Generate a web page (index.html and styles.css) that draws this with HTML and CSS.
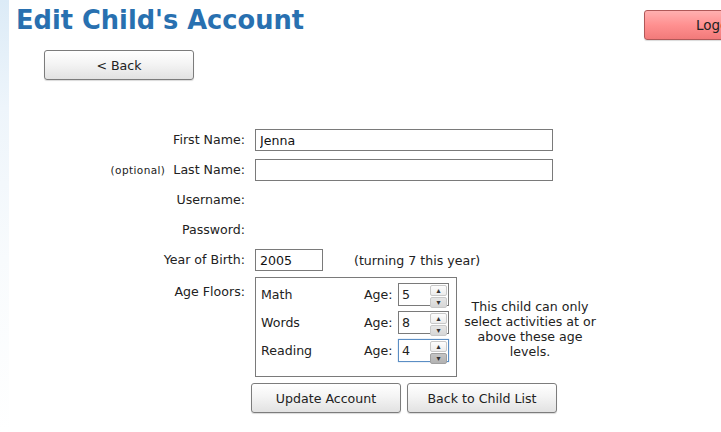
FILE: index.html
```html
<!DOCTYPE html>
<html lang="en">
<head>
    <meta charset="UTF-8">
    <title>Edit Child's Account</title>
    <link rel="stylesheet" href="styles.css">
</head>
<body>
    <div class="edge"></div>
    <div class="page">
        <div class="header">
            <h1>Edit Child's Account</h1>
            <button class="btn btn-logout">Logout</button>
        </div>
        <button class="btn btn-back">&lt; Back</button>

        <form class="account-form">
            <label class="label">First Name:</label>
            <div class="field"><input class="text-input wide" type="text" value="Jenna"></div>

            <label class="label"><span class="optional">(optional)</span>Last Name:</label>
            <div class="field"><input class="text-input wide" type="text"></div>

            <label class="label">Username:</label>
            <div class="field"></div>

            <label class="label">Password:</label>
            <div class="field"></div>

            <label class="label">Year of Birth:</label>
            <div class="field">
                <input class="text-input short" type="text" value="2005">
                <span class="turning">(turning 7 this year)</span>
            </div>

            <label class="label label-top">Age Floors:</label>
            <div class="field field-top">
                <div class="floors">
                    <div class="floor-row">
                        <span class="subject">Math</span>
                        <span class="age">Age:</span>
                        <div class="spin">
                            <span class="spin-value">5</span>
                            <div class="spin-arrows">
                                <span class="arrow">&#9652;</span>
                                <span class="arrow down">&#9662;</span>
                            </div>
                        </div>
                    </div>
                    <div class="floor-row">
                        <span class="subject">Words</span>
                        <span class="age">Age:</span>
                        <div class="spin">
                            <span class="spin-value">8</span>
                            <div class="spin-arrows">
                                <span class="arrow">&#9652;</span>
                                <span class="arrow down">&#9662;</span>
                            </div>
                        </div>
                    </div>
                    <div class="floor-row">
                        <span class="subject">Reading</span>
                        <span class="age">Age:</span>
                        <div class="spin focused">
                            <span class="spin-value">4</span>
                            <div class="spin-arrows">
                                <span class="arrow">&#9652;</span>
                                <span class="arrow down pressed">&#9662;</span>
                            </div>
                        </div>
                    </div>
                </div>
                <p class="floor-note">This child can only select activities at or above these age levels.</p>
            </div>

            <div></div>
            <div class="actions">
                <button type="button" class="btn btn-action">Update Account</button>
                <button type="button" class="btn btn-action">Back to Child List</button>
            </div>
        </form>
    </div>
</body>
</html>
```

FILE: styles.css
```css
body {
    margin: 0;
    font-family: "DejaVu Sans", Verdana, sans-serif;
    font-size: 12.6px;
    color: #222;
    background: #fff;
    height: 432px;
    overflow: hidden;
    position: relative;
}
.edge {
    position: absolute;
    left: 0;
    top: 0;
    width: 9px;
    height: 432px;
    background: linear-gradient(180deg, #dcebf7 0%, #eef5fb 25%, #f8fbfd 60%, #fff 100%);
}
.page {
    position: relative;
}
.header {
    display: flex;
    justify-content: space-between;
    align-items: flex-start;
    height: 50px;
}
.header h1 {
    margin: 5px 0 0 16px;
    font-size: 25.7px;
    font-weight: bold;
    color: #2870b0;
}
.btn {
    font-family: "DejaVu Sans", Verdana, sans-serif;
    font-size: 12.6px;
    color: #222;
    height: 30px;
    width: 150px;
    border: 1px solid #7c7c7c;
    border-radius: 3px;
    background: linear-gradient(180deg, #ffffff 0%, #f4f4f4 45%, #e2e2e2 100%);
    box-shadow: 0 1px 1px rgba(0, 0, 0, 0.15);
    padding: 0;
}
.btn-logout {
    margin-top: 10px;
    margin-right: -73px;
    text-align: left;
    padding-left: 51px;
    font-size: 13.5px;
    border-color: #b05858;
    background: linear-gradient(180deg, #ffb0b0 0%, #ff9090 50%, #f27a7a 100%);
}
.btn-back {
    margin-left: 44px;
    display: block;
}
.account-form {
    display: grid;
    grid-template-columns: 245px auto;
    column-gap: 10px;
    row-gap: 8px;
    margin-top: 49px;
    width: 600px;
}
.label {
    text-align: right;
    height: 22px;
    line-height: 22px;
    white-space: nowrap;
}
.label-top {
    line-height: 26px;
}
.optional {
    font-size: 10.5px;
    letter-spacing: 0.4px;
    margin-right: 8px;
}
.field {
    display: flex;
    align-items: center;
    height: 22px;
}
.field-top {
    height: auto;
    align-items: flex-start;
    gap: 6px;
    margin-top: -2px;
}
.text-input {
    box-sizing: border-box;
    height: 22px;
    border: 1px solid #7a7a7a;
    font-family: "DejaVu Sans", Verdana, sans-serif;
    font-size: 12.6px;
    padding: 0 4px;
    color: #111;
}
.wide {
    width: 298px;
}
.short {
    width: 68px;
}
.turning {
    margin-left: 31px;
}
.floors {
    box-sizing: border-box;
    width: 202px;
    height: 100px;
    border: 1px solid #7a7a7a;
    padding: 5px 7px 0 5px;
    display: flex;
    flex-direction: column;
    gap: 6px;
}
.floor-row {
    display: flex;
    align-items: center;
    height: 22px;
}
.subject {
    width: 103px;
}
.age {
    width: 34px;
}
.spin {
    box-sizing: border-box;
    width: 51px;
    height: 23px;
    border: 1px solid #7a7a7a;
    display: flex;
    align-items: stretch;
    background: #fff;
}
.spin.focused {
    border-color: #5b8ec4;
    box-shadow: 0 0 1px #8cb4dc;
}
.spin-value {
    flex: 1;
    padding-left: 3px;
    line-height: 21px;
}
.spin-arrows {
    width: 17px;
    display: flex;
    flex-direction: column;
    padding: 1px;
    gap: 1px;
}
.arrow {
    flex: 1;
    font-size: 8px;
    line-height: 9px;
    text-align: center;
    color: #333;
    border: 1px solid #c8c8c8;
    border-radius: 2px;
    background: linear-gradient(180deg, #fdfdfd, #ececec);
}
.arrow.down {
    background: linear-gradient(180deg, #e6e6e6, #d6d6d6);
}
.arrow.pressed {
    background: linear-gradient(180deg, #c4c4c4, #b2b2b2);
    border-color: #a0a0a0;
}
.floor-note {
    margin: 22px 0 0 0;
    width: 134px;
    text-align: center;
    line-height: 15px;
}
.actions {
    display: flex;
    gap: 6px;
    margin-left: -4px;
    margin-top: -2px;
}
```
